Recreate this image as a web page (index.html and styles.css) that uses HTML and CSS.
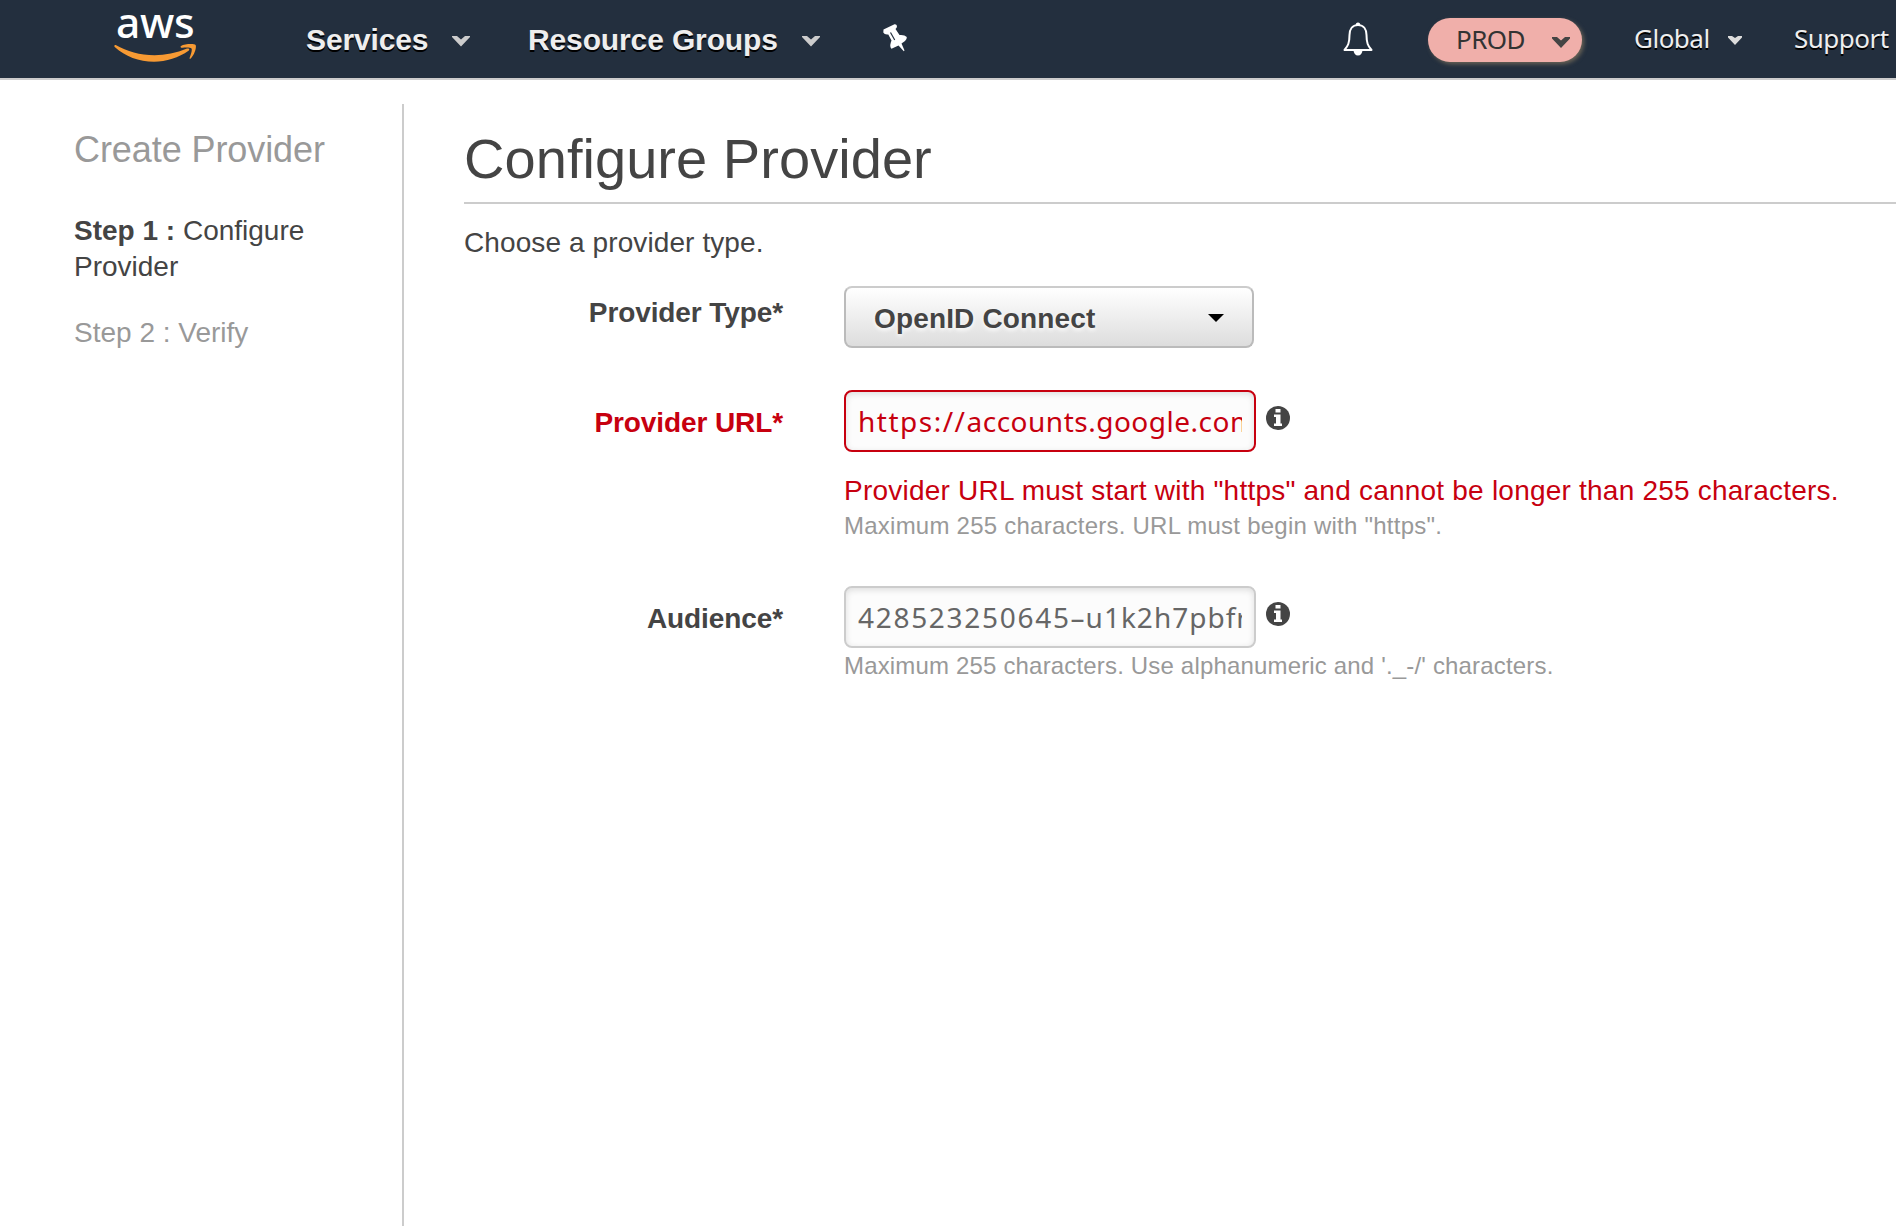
FILE: index.html
```html
<!DOCTYPE html>
<html lang="en">
<head>
<meta charset="utf-8">
<title>Configure Provider</title>
<link rel="stylesheet" href="styles.css">
</head>
<body>
<header class="topbar">
  <a class="logo">
    <span class="logo-text">aws</span>
    <svg class="logo-smile" viewBox="0 0 82 18" width="82" height="18"><path fill="#f79a33" d="M.6 1.2C.1 1.9.3 2.6 1 3.2 11 12.300 25 17.700 40 17.700 52 17.700 65 13.700 74.500 6.800 76.200 5.600 74.900 3.800 73 4.600 62.500 9 51 11.200 40.500 11.200 26 11.200 13 7.300 1.700 1Q1 .7.600 1.200ZM67 2C70.500-.2 80.500-.5 81.600 1 82.700 2.600 81 10.500 76.800 14.500 76 15.200 75.200 14.800 75.600 13.900 76.700 11.200 78.500 5.800 77.500 4.400 76.400 3.100 70.500 3.500 67.800 3.800 66.600 3.900 66.200 2.600 67 2Z"/></svg>
  </a>
  <nav class="menu">
    <a class="menu-item services">Services</a>
    <svg class="chev chev-a" viewBox="0 0 18 11" width="18" height="11"><path fill="#ccc" d="M0 0h5l4 3.500L13 0h5v1L9 10.500 0 1z"/></svg>
    <a class="menu-item groups">Resource Groups</a>
    <svg class="chev chev-b" viewBox="0 0 18 11" width="18" height="11"><path fill="#ccc" d="M0 0h5l4 3.500L13 0h5v1L9 10.500 0 1z"/></svg>
    <svg class="pin" viewBox="0 0 24 28" width="24" height="28"><path fill="#fff" d="M.5 5.500 11.500.3Q13.500 0 14 2 14 4 12.500 5L16.500 11Q21.500 10.500 23.800 13 24 15.500 22 17L18.500 19.500 21.500 26.500 20.800 27.200 15.500 21.500 8.500 24.800Q6.500 23 7.800 18.500L8.500 16.500 5.300 10.500Q1.500 11 .3 8.500Z"/><path fill="none" stroke="#232f3e" stroke-width="1.200" d="m7.500 8.500 4.200 7.500"/></svg>
  </nav>
  <div class="account">
    <svg class="bell" viewBox="0 0 30 34" width="30" height="34"><path fill="none" stroke="#fff" stroke-width="2" stroke-linejoin="round" d="M15 3C9 3 6.500 8 6.500 13 6.500 21 5 24 1.500 28H28.500C25 24 23.500 21 23.500 13 23.500 8 21 3 15 3Z"/><path fill="#fff" d="M13 3V1.500Q15-.5 17 1.500V3zM10.500 28a4.500 5.500 0 0 0 9 0z"/></svg>
    <div class="pill"><span class="prod">PROD</span><svg viewBox="0 0 18 11" width="18" height="11"><path fill="#444" d="M0 0h5l4 3.500L13 0h5v1.500L9 11 0 1.500z"/></svg></div>
    <a class="link global">Global</a>
    <svg class="chev chev-c" viewBox="0 0 14 9" width="14" height="9"><path fill="#ddd" d="M0 0h4l3 2 3-2h4v1.500L7 9 0 1.500z"/></svg>
    <a class="link support">Support</a>
  </div>
</header>
<div class="layout">
  <aside class="steps">
    <h2>Create Provider</h2>
    <p class="current"><b>Step 1 :</b> Configure Provider</p>
    <p class="next">Step 2 : Verify</p>
  </aside>
  <main class="content">
    <h1>Configure Provider</h1>
    <p class="intro">Choose a provider type.</p>
    <div class="row row-type">
      <label>Provider Type*</label>
      <div class="select"><span>OpenID Connect</span><svg viewBox="0 0 16 8" width="16" height="8"><path d="M0 0h16L8 8z"/></svg></div>
    </div>
    <div class="row row-url">
      <label>Provider URL*</label>
      <div class="field">
        <div class="control">
          <div class="input invalid"><span class="value"><span class="scheme">https://</span>accounts.google.com</span></div>
          <svg class="info" viewBox="0 0 24 24" width="24" height="24"><circle cx="12" cy="12" r="12" fill="#444"/><path fill="#fff" d="M9.500 3h5v3.500h-5zM8 8.500h6.500v9H16V20H8v-2.500h2V11H8z"/></svg>
        </div>
        <p class="error">Provider URL must start with "https" and cannot be longer than 255 characters.</p>
        <p class="hint">Maximum 255 characters. URL must begin with "https".</p>
      </div>
    </div>
    <div class="row row-audience">
      <label>Audience*</label>
      <div class="field">
        <div class="control">
          <div class="input"><span class="value"><span class="digits">428523250645</span>–u1k2h7pbfr</span></div>
          <svg class="info" viewBox="0 0 24 24" width="24" height="24"><circle cx="12" cy="12" r="12" fill="#444"/><path fill="#fff" d="M9.500 3h5v3.500h-5zM8 8.500h6.500v9H16V20H8v-2.500h2V11H8z"/></svg>
        </div>
        <p class="hint hint-audience">Maximum 255 characters. Use alphanumeric and '._-/' characters.</p>
      </div>
    </div>
  </main>
</div>
</body>
</html>
```
FILE: styles.css
```css
* { box-sizing: border-box; }
body {
  margin: 0;
  height: 1226px;
  overflow: hidden;
  display: flex;
  flex-direction: column;
  background: #fff;
  color: #444;
  font: 28px/36px "Liberation Sans", Arial, sans-serif;
}
h1, h2, p { margin: 0; font-weight: normal; }
svg { display: block; flex: none; }

.topbar {
  display: flex;
  height: 80px;
  flex: none;
  background: #232f3e;
  border-bottom: 2px solid #ccc;
  white-space: nowrap;
}
.logo { width: 192px; padding-left: 114px; flex: none; }
.logo-text {
  display: block;
  height: 44px;
  padding-left: 2px;
  font: 500 42.5px/44px "Noto Sans", sans-serif;
  letter-spacing: -0.3px;
  color: #fff;
}
.menu, .account { display: flex; align-items: flex-start; flex: none; }
.menu { width: 1151px; padding-left: 114px; }
.menu-item {
  font-size: 30px;
  font-weight: bold;
  line-height: 80px;
  height: 78px;
  letter-spacing: -0.13px;
  color: #eee;
  text-shadow: 0 2px 0 #000;
}
.services { width: 146px; }
.groups { width: 248px; }
.chev { margin-top: 36px; }
.chev-a { margin-right: 58px; }
.chev-b { margin: 36px 63px 0 26px; }
.pin { margin-top: 24px; }
.bell { margin: 22px 55px 0 0; }
.pill {
  display: flex;
  width: 154px;
  height: 44px;
  margin: 18px 52px 0 0;
  padding-left: 28px;
  border-radius: 22px;
  background: #f0afaa;
  box-shadow: 2px 2px 4px #6b6457;
}
.prod { width: 96px; color: #333; letter-spacing: -0.6px; font: 26px/42px "Noto Sans", sans-serif; }
.pill svg { margin-top: 19px; }
.link {
  font: 26px/77px "Noto Sans", sans-serif;
  letter-spacing: -0.5px;
  color: #eee;
  text-shadow: 0 2px 0 #000;
}
.global { width: 94px; }
.chev-c { margin-right: 52px; }

.layout { display: flex; flex: 1; padding-top: 24px; }
.steps { width: 404px; padding: 24px 60px 0 74px; border-right: 2px solid #ccc; flex: none; }
.steps h2 { font-size: 36px; line-height: 44px; color: #999; letter-spacing: -0.08px; }
.current { margin-top: 41px; }
.next { margin-top: 30px; color: #999; }

.content { flex: 1; min-width: 0; padding-left: 60px; }
.content h1 { height: 100px; padding-top: 22px; border-bottom: 2px solid #ccc; font-size: 56px; line-height: 66px; letter-spacing: 0.05px; }
.intro { margin-top: 21px; letter-spacing: 0.1px; }
.row { display: flex; }
.row label { width: 319px; margin-right: 61px; text-align: right; font-weight: bold; letter-spacing: -0.1px; }
.row-type { margin-top: 25px; }
.row-type label { padding-top: 9px; }
.select {
  display: flex;
  align-items: center;
  justify-content: space-between;
  width: 410px;
  height: 62px;
  padding: 0 28px;
  border: 2px solid #bbb;
  border-top-color: #ccc;
  border-radius: 8px;
  background: linear-gradient(#fff, #ddd);
  font-weight: bold;
  letter-spacing: 0.15px;
  text-shadow: 0 2px 4px #fff;
}
.select span { padding-top: 3px; }
.select svg { fill: #000; margin-top: 1px; }
.row-url { margin-top: 42px; }
.row-url label, .row-audience label { padding-top: 15px; }
.row-url label { color: #c7000f; }
.control { display: flex; }
.input {
  width: 412px;
  height: 62px;
  padding: 0 12px;
  border: 2px solid #ccc;
  border-radius: 8px;
  background: #fcfcfc;
  box-shadow: inset 0 2px 6px #ddd;
  color: #666;
}
.invalid { border-color: #c7000f; color: #c7000f; }
.value {
  display: block;
  overflow: hidden;
  white-space: nowrap;
  font: 28px/58px "Noto Sans", sans-serif;
  letter-spacing: 1px;
}
.invalid .value { letter-spacing: 0.5px; }
.invalid .scheme { letter-spacing: 1.5px; }
.digits { letter-spacing: 1.7px; }
.info { margin: 16px 0 0 9.5px; }
.error { margin-top: 21px; color: #c7000f; white-space: nowrap; letter-spacing: 0.22px; }
.hint { margin-top: -1px; font-size: 24px; color: #999; white-space: nowrap; letter-spacing: 0.24px; }
.hint-audience { margin-top: 0; letter-spacing: 0.17px; }
.row-audience { margin-top: 42px; }
```
